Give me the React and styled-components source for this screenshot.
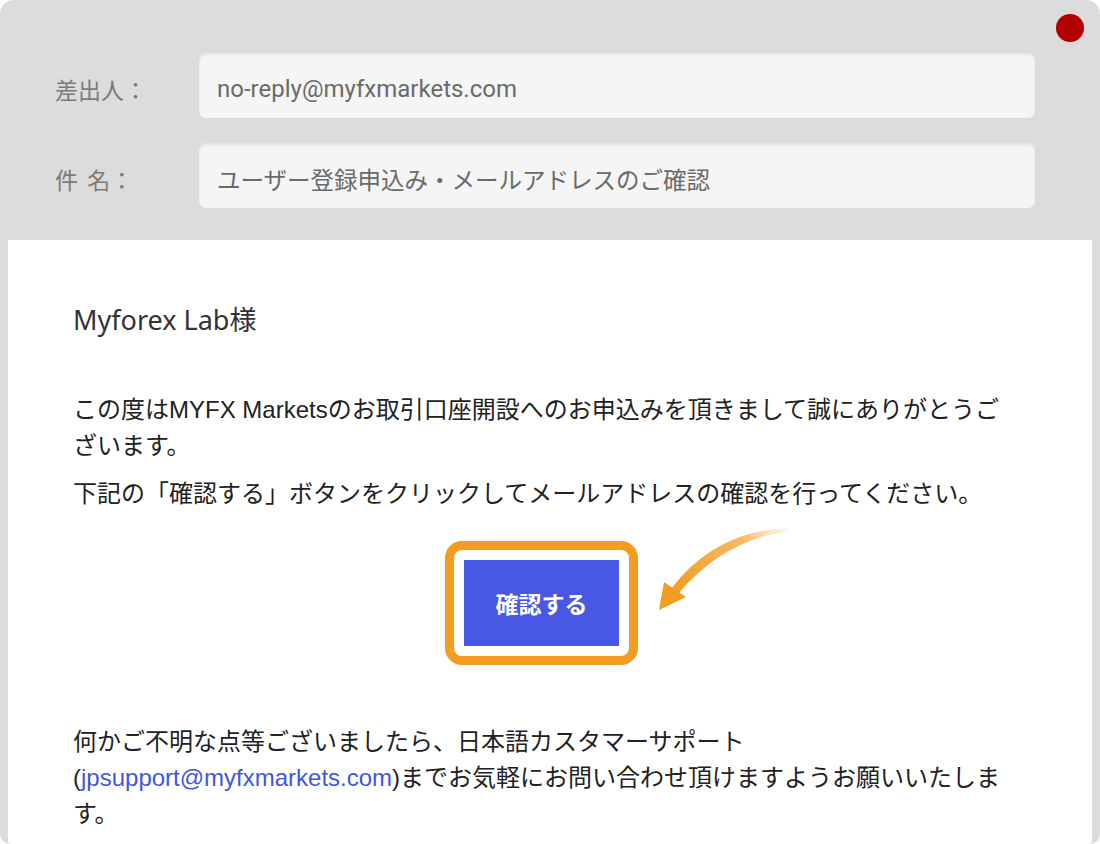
import React from 'react'
import styled, { createGlobalStyle } from 'styled-components'

const GlobalStyle = createGlobalStyle`
  html, body {
    margin: 0;
    padding: 0;
    background: #ffffff;
  }
  * {
    box-sizing: border-box;
  }
`

const Window = styled.div`
  position: relative;
  width: 1100px;
  height: 844px;
  background: #dcdcdc;
  border-radius: 14px 14px 10px 10px;
  display: flex;
  flex-direction: column;
  overflow: hidden;
`

const CloseDot = styled.span`
  position: absolute;
  top: 14px;
  right: 16px;
  width: 28px;
  height: 28px;
  border-radius: 50%;
  background: #b30000;
`

const Header = styled.div`
  display: flex;
  flex-direction: column;
  gap: 25px;
  padding: 53px 65px 32px 55px;
`

const FieldRow = styled.div`
  display: flex;
  align-items: center;
`

const Label = styled.span`
  width: 144px;
  flex-shrink: 0;
  padding-top: 6px;
  font-family: "Noto Sans CJK JP", sans-serif;
  font-size: 23px;
  word-spacing: 4px;
  color: #7a7a7a;
`

const Field = styled.div`
  flex: 1;
  height: 65px;
  display: flex;
  align-items: center;
  padding: 6px 18px 0;
  background: #f5f5f5;
  border-radius: 7px;
  box-shadow: inset 0 2px 3px rgba(0, 0, 0, 0.07);
  font-family: Roboto, "Noto Sans CJK JP", sans-serif;
  font-size: ${({ $size }) => $size || 24}px;
  color: #6a6a6a;
`

const Panel = styled.div`
  flex: 1;
  margin: 0 8px 8px;
  padding: 62px 40px 0 65px;
  background: #ffffff;
  border-radius: 0 0 4px 4px;
  font-family: "Liberation Sans", "Noto Sans CJK JP", sans-serif;
  color: #222222;
`

const Greeting = styled.h1`
  margin: 0 0 54px;
  font-family: "Noto Sans", "Noto Sans CJK JP", sans-serif;
  font-size: 27px;
  line-height: 36px;
  font-weight: 400;
  color: #333333;
`

const Para = styled.p`
  margin: 0 0 ${({ $gap }) => $gap || 12}px;
  font-size: 24px;
  line-height: 36px;
`

const ButtonRow = styled.div`
  display: flex;
  justify-content: center;
  padding: 17px 42px 0 0;
  margin-bottom: 59px;
`

const Highlight = styled.div`
  position: relative;
  padding: 10px;
  border: 9px solid #f39c21;
  border-radius: 17px;
`

const ConfirmButton = styled.button`
  width: 155px;
  height: 86px;
  border: none;
  background: #4858e4;
  color: #ffffff;
  font-family: "Noto Sans CJK JP", sans-serif;
  font-size: 23px;
  font-weight: 700;
  cursor: pointer;
`

const Arrow = styled.svg`
  position: absolute;
  left: 200px;
  top: -26px;
  width: 140px;
  height: 90px;
  overflow: visible;
`

const Link = styled.a`
  color: #3f57e0;
  text-decoration: none;
`

const CurvedArrow = () => (
  <Arrow viewBox="0 0 140 90">
    <defs>
      <linearGradient id="arrowFade" gradientUnits="userSpaceOnUse" x1="136" y1="5" x2="20" y2="70">
        <stop offset="0" stopColor="#f8c27a" stopOpacity="0.1" />
        <stop offset="0.35" stopColor="#f6b151" stopOpacity="0.9" />
        <stop offset="1" stopColor="#f39c21" />
      </linearGradient>
    </defs>
    <path d="M136 4 Q62 6 17 65 L24 70 Q70 15 136 7 Z" fill="url(#arrowFade)" />
    <polygon points="5,86 10,58 32,73" fill="#f39c21" />
  </Arrow>
)

export default function App() {
  return (
    <>
      <GlobalStyle />
      <Window>
        <CloseDot />
        <Header>
          <FieldRow>
            <Label>差出人：</Label>
            <Field>no-reply@myfxmarkets.com</Field>
          </FieldRow>
          <FieldRow>
            <Label>件 名：</Label>
            <Field $size={23.5}>ユーザー登録申込み・メールアドレスのご確認</Field>
          </FieldRow>
        </Header>
        <Panel>
          <Greeting>Myforex Lab様</Greeting>
          <Para>
            この度はMYFX Marketsのお取引口座開設へのお申込みを頂きまして誠にありがとうご
            <br />
            ざいます。
          </Para>
          <Para $gap={0}>下記の「確認する」ボタンをクリックしてメールアドレスの確認を行ってください。</Para>
          <ButtonRow>
            <Highlight>
              <ConfirmButton>確認する</ConfirmButton>
              <CurvedArrow />
            </Highlight>
          </ButtonRow>
          <Para $gap={0}>
            何かご不明な点等ございましたら、日本語カスタマーサポート
            <br />
            (<Link href="#">jpsupport@myfxmarkets.com</Link>)までお気軽にお問い合わせ頂けますようお願いいたしま
            <br />
            す。
          </Para>
        </Panel>
      </Window>
    </>
  )
}
